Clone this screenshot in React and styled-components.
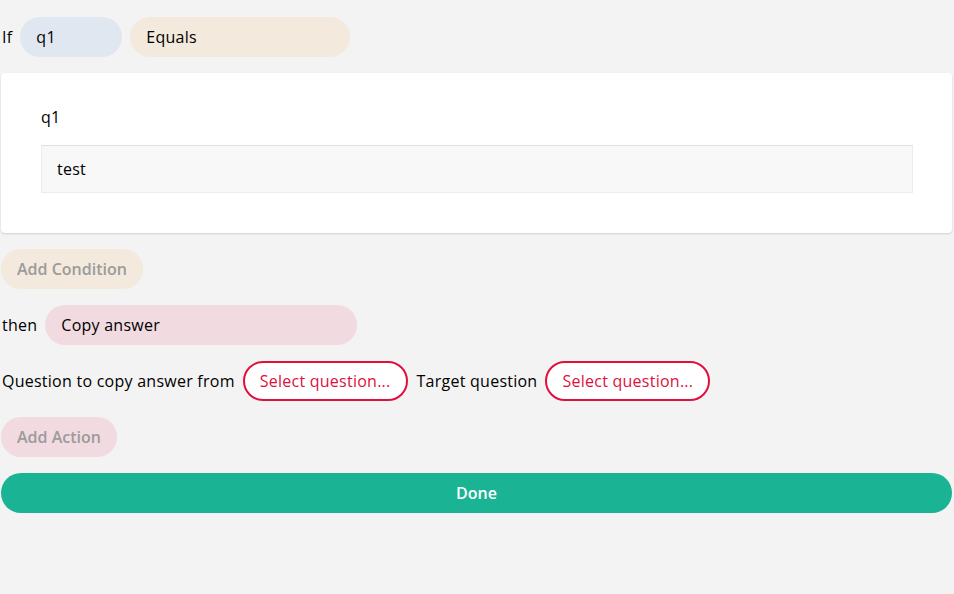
import React from "react";
import styled, { createGlobalStyle } from "styled-components";

const GlobalStyle = createGlobalStyle`
  html, body {
    margin: 0;
    padding: 0;
    background: #f3f3f3;
    font-family: "Open Sans", "Noto Sans", sans-serif;
    font-size: 16px;
    letter-spacing: 0.25px;
    color: #000;
  }
`;

const Page = styled.div`
  display: flex;
  flex-direction: column;
  gap: 16px;
  padding: 17px 2px 0 1px;
  width: 954px;
  box-sizing: border-box;
`;

const Row = styled.div`
  display: flex;
  flex-direction: row;
  align-items: center;
  gap: 8px;
  height: 40px;
`;

const Label = styled.span`
  padding-left: 1px;
  white-space: nowrap;
`;

const Pill = styled.div`
  height: 40px;
  width: ${({ width }) => width}px;
  box-sizing: border-box;
  border-radius: 20px;
  background: ${({ bg }) => bg};
  padding: 0 16px;
  display: flex;
  align-items: center;
`;

const Card = styled.div`
  background: #fff;
  border-radius: 4px;
  box-shadow: 0 1px 2px rgba(0, 0, 0, 0.15);
  padding: 33px 39px 40px 40px;
  display: flex;
  flex-direction: column;
  gap: 16px;
`;

const Question = styled.div`
  line-height: 23px;
`;

const Input = styled.div`
  height: 48px;
  box-sizing: border-box;
  background: #f8f8f8;
  border: 1px solid #ececec;
  border-top-color: #e0e0e0;
  padding: 0 15px;
  display: flex;
  align-items: center;
`;

const GhostButton = styled.div`
  align-self: flex-start;
  height: 40px;
  box-sizing: border-box;
  border-radius: 20px;
  background: ${({ bg }) => bg};
  color: #9b9b9b;
  font-weight: 600;
  letter-spacing: 0;
  padding: 0 16px;
  display: flex;
  align-items: center;
`;

const Select = styled.div`
  height: 40px;
  box-sizing: border-box;
  border: 2px solid #e0103e;
  border-radius: 20px;
  background: #fff;
  color: #e0103e;
  padding: 0 15px;
  display: flex;
  align-items: center;
  white-space: nowrap;
`;

const Done = styled.div`
  height: 40px;
  border-radius: 20px;
  background: #1ab394;
  color: #fff;
  font-weight: 600;
  letter-spacing: 0;
  display: flex;
  align-items: center;
  justify-content: center;
`;

export default function App() {
  return (
    <>
      <GlobalStyle />
      <Page>
        <Row>
          <Label>If</Label>
          <Pill width={102} bg="#e1e7f0">q1</Pill>
          <Pill width={220} bg="#f3e9dc">Equals</Pill>
        </Row>
        <Card>
          <Question>q1</Question>
          <Input>test</Input>
        </Card>
        <GhostButton bg="#f3e9dc">Add Condition</GhostButton>
        <Row>
          <Label>then</Label>
          <Pill width={312} bg="#f1dae0">Copy answer</Pill>
        </Row>
        <Row>
          <Label>Question to copy answer from</Label>
          <Select>Select question...</Select>
          <Label>Target question</Label>
          <Select>Select question...</Select>
        </Row>
        <GhostButton bg="#f1dae0">Add Action</GhostButton>
        <Done>Done</Done>
      </Page>
    </>
  );
}
